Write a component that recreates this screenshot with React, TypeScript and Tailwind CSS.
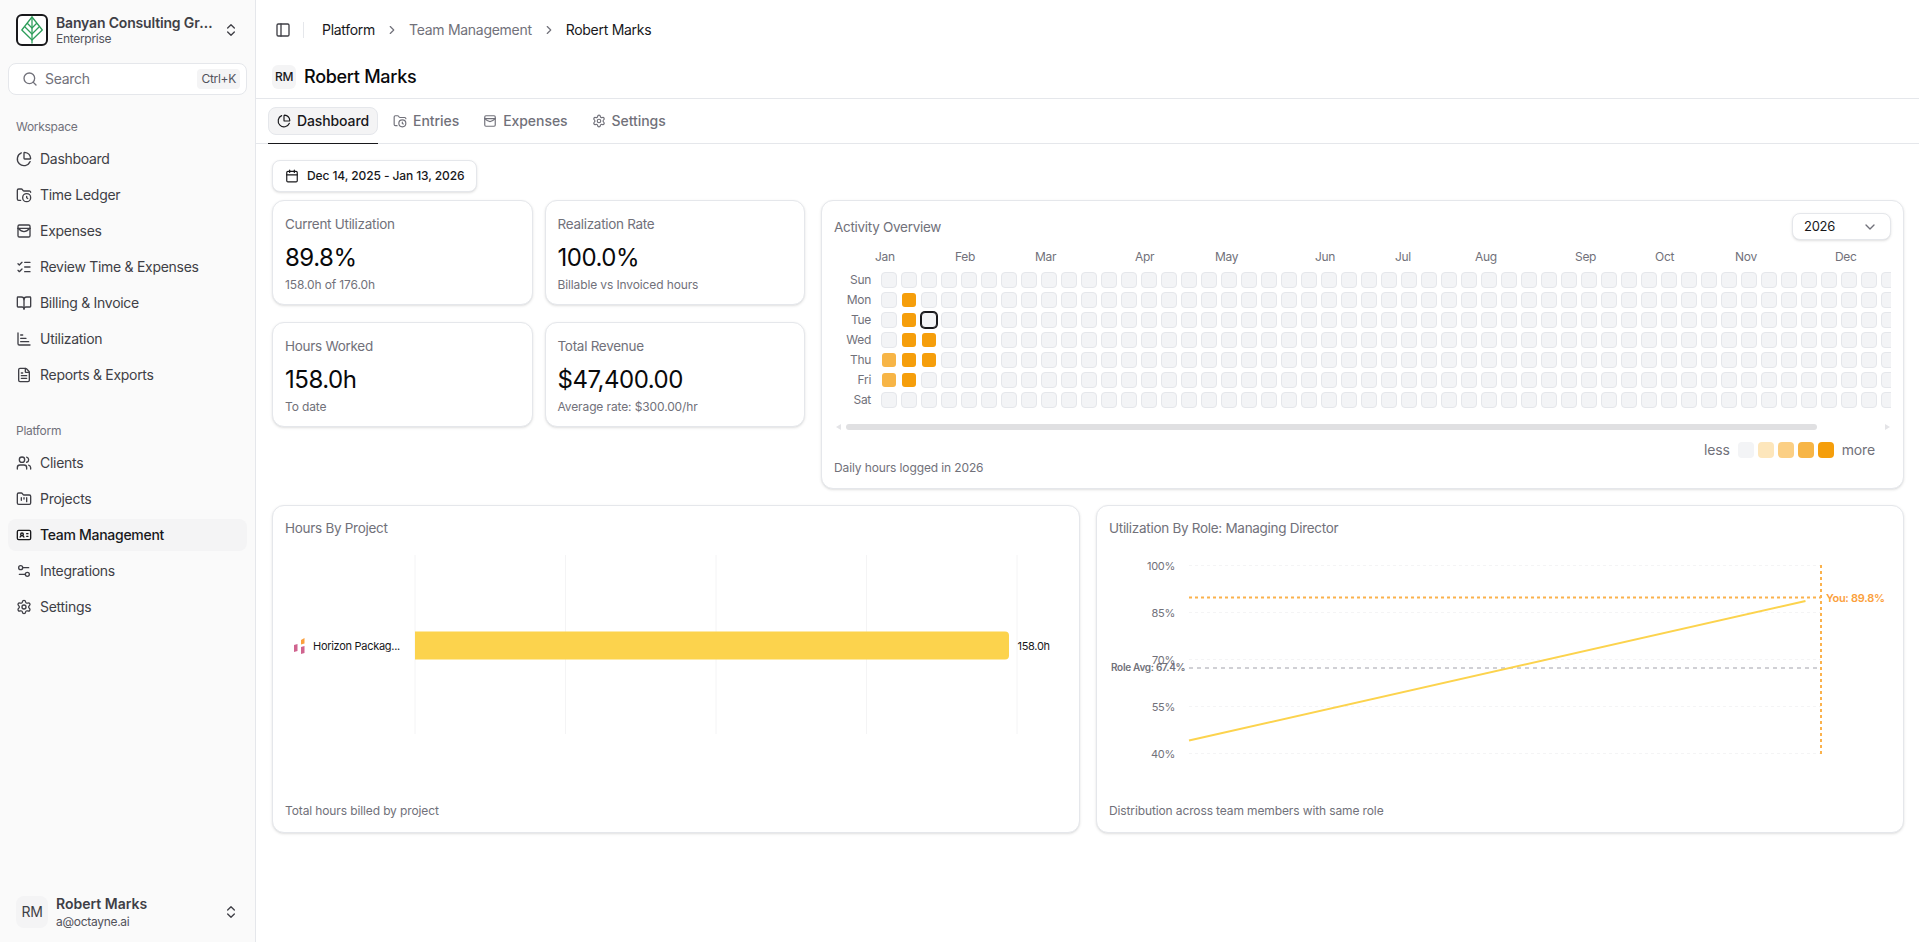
import React from 'react';
import {
  BookOpen,
  Calendar,
  ChartBarIncreasing,
  ChartPie,
  ChevronDown,
  ChevronRight,
  ChevronsUpDown,
  FileText,
  FolderClock,
  FolderKanban,
  IdCard,
  ListChecks,
  PanelLeft,
  Search,
  Settings,
  Settings2,
  Users,
} from 'lucide-react';

const cardClass = 'rounded-xl border border-[#e5e7eb] bg-white shadow-sm';

const ExpenseIcon: React.FC<{ size?: number }> = ({ size = 16 }) => (
  <svg width={size} height={size} viewBox="0 0 24 24" fill="none" stroke="currentColor" strokeWidth={2} strokeLinecap="round" strokeLinejoin="round">
    <rect x="3" y="3" width="18" height="18" rx="2" />
    <path d="M3 8h18" />
    <path d="M3 8c3 3 6 5 9 5s6-2 9-5" />
  </svg>
);

const BanyanLogo = () => (
  <svg width="32" height="32" viewBox="0 0 32 32" fill="none" className="shrink-0">
    <rect x="1" y="1" width="30" height="30" rx="5" fill="#fff" stroke="#18181b" strokeWidth="2" />
    <g stroke="#2e9e5b" strokeWidth="1.3" strokeLinecap="round" strokeLinejoin="round">
      <path d="M16 3 26.3 16 16 26 5.8 16Z" />
      <path d="M16 3v26" />
      <path d="M16 14 11.5 9.5M16 14l4.5-4.5M16 20l-7-7M16 20l7-7" />
    </g>
  </svg>
);

const workspaceItems = [
  { label: 'Dashboard', icon: <ChartPie size={16} /> },
  { label: 'Time Ledger', icon: <FolderClock size={16} /> },
  { label: 'Expenses', icon: <ExpenseIcon /> },
  { label: 'Review Time & Expenses', icon: <ListChecks size={16} /> },
  { label: 'Billing & Invoice', icon: <BookOpen size={16} /> },
  { label: 'Utilization', icon: <ChartBarIncreasing size={16} /> },
  { label: 'Reports & Exports', icon: <FileText size={16} /> },
];

const platformItems = [
  { label: 'Clients', icon: <Users size={16} /> },
  { label: 'Projects', icon: <FolderKanban size={16} /> },
  { label: 'Team Management', icon: <IdCard size={16} />, active: true },
  { label: 'Integrations', icon: <Settings2 size={16} /> },
  { label: 'Settings', icon: <Settings size={16} /> },
];

const NavItem: React.FC<{ label: string; icon: React.ReactNode; active?: boolean }> = ({ label, icon, active }) => (
  <a
    className={
      active
        ? 'flex h-8 items-center gap-2 rounded-lg bg-[#f4f4f5] px-2 text-sm font-medium text-[#18181b]'
        : 'flex h-8 items-center gap-2 rounded-lg px-2 text-sm text-[#3f3f46]'
    }
  >
    {icon}
    <span>{label}</span>
  </a>
);

const Sidebar = () => (
  <aside className="flex h-screen w-[256px] shrink-0 flex-col border-r border-[#e5e7eb] bg-[#fafafa] px-2">
    <div className="mt-[14px] flex h-8 items-center gap-2 px-2">
      <BanyanLogo />
      <div className="min-w-0 flex-1">
        <div className="truncate text-sm leading-[18px] font-semibold tracking-[-0.012em] text-[#3f3f46]">Banyan Consulting Group</div>
        <div className="text-xs leading-[14px] text-[#52525b]">Enterprise</div>
      </div>
      <ChevronsUpDown size={16} className="shrink-0 text-[#3f3f46]" />
    </div>
    <div className="mt-[17px] flex h-8 items-center rounded-lg border border-[#e5e7eb] bg-white pr-[6px] pl-[13px] text-sm text-[#71717a]">
      <Search size={16} />
      <span className="ml-[7px] flex-1">Search</span>
      <kbd className="flex h-5 items-center rounded bg-[#f4f4f5] px-1 font-[family-name:Inter,sans-serif] text-xs text-[#52525b]">Ctrl+K</kbd>
    </div>
    <div className="mt-6 px-2 text-xs leading-4 text-[#71717a]">Workspace</div>
    <nav className="mt-2 flex flex-col gap-1">
      {workspaceItems.map((item) => (
        <NavItem key={item.label} {...item} />
      ))}
    </nav>
    <div className="mt-8 px-2 text-xs leading-4 text-[#71717a]">Platform</div>
    <nav className="mt-2 flex flex-col gap-1">
      {platformItems.map((item) => (
        <NavItem key={item.label} {...item} />
      ))}
    </nav>
    <div className="mt-auto mb-[14px] flex h-8 items-center gap-2 px-2">
      <div className="flex h-8 w-8 shrink-0 items-center justify-center rounded-lg bg-[#f4f4f5] text-sm text-[#3f3f46]">RM</div>
      <div className="min-w-0 flex-1">
        <div className="truncate text-sm leading-[18px] font-semibold tracking-normal text-[#3f3f46]">Robert Marks</div>
        <div className="mt-[2px] text-xs leading-[14px] text-[#52525b]">a@octayne.ai</div>
      </div>
      <ChevronsUpDown size={16} className="shrink-0 text-[#3f3f46]" />
    </div>
  </aside>
);

const tabs = [
  { label: 'Dashboard', icon: <ChartPie size={14} />, active: true },
  { label: 'Entries', icon: <FolderClock size={14} /> },
  { label: 'Expenses', icon: <ExpenseIcon size={14} /> },
  { label: 'Settings', icon: <Settings size={14} /> },
];

const PageHeader = () => (
  <header>
    <div className="flex h-[60px] items-center pl-[19px] text-sm">
      <PanelLeft size={16} className="text-[#3f3f46]" />
      <div className="mr-[18px] ml-3 h-4 w-px bg-[#e5e7eb]" />
      <div className="flex items-center gap-2.5">
        <span className="text-[#18181b]">Platform</span>
        <ChevronRight size={14} className="text-[#71717a]" />
        <span className="text-[#71717a]">Team Management</span>
        <ChevronRight size={14} className="text-[#71717a]" />
        <span className="text-[#18181b]">Robert Marks</span>
      </div>
    </div>
    <div className="mt-[5px] flex items-center gap-2 border-b border-[#e5e7eb] pb-[9px] pl-4">
      <div className="flex h-6 w-6 items-center justify-center rounded-md bg-[#f4f4f5] text-xs font-medium text-[#18181b]">RM</div>
      <h1 className="text-lg leading-6 font-medium text-[#09090b]">Robert Marks</h1>
    </div>
    <nav className="flex gap-1.5 border-b border-[#e5e7eb] px-3">
      {tabs.map((tab) => (
        <div key={tab.label} className={tab.active ? '-mb-px border-b border-[#18181b] pt-2 pb-2' : '-mb-px border-b border-transparent pt-2 pb-2'}>
          <div
            className={
              tab.active
                ? 'flex h-7 items-center gap-1.5 rounded-lg border border-[#e5e7eb] bg-[#f4f4f5] px-2 text-sm font-medium tracking-[-0.008em] text-[#18181b]'
                : 'flex h-7 items-center gap-1.5 rounded-lg border border-transparent px-2 text-sm font-medium tracking-[-0.004em] text-[#71717a]'
            }
          >
            {tab.icon}
            {tab.label}
          </div>
        </div>
      ))}
    </nav>
  </header>
);

const stats = [
  { title: 'Current Utilization', value: '89.8%', note: '158.0h of 176.0h' },
  { title: 'Realization Rate', value: '100.0%', note: 'Billable vs Invoiced hours' },
  { title: 'Hours Worked', value: '158.0h', note: 'To date' },
  { title: 'Total Revenue', value: '$47,400.00', note: 'Average rate: $300.00/hr' },
];

const StatCard: React.FC<{ title: string; value: string; note: string }> = ({ title, value, note }) => (
  <div className={`${cardClass} h-[105px] px-3 pt-[13px]`}>
    <div className="text-[13.5px] leading-5 text-[#71717a]">{title}</div>
    <div className="mt-2 text-2xl leading-8 font-normal tracking-[-0.02em] text-[#09090b]">{value}</div>
    <div className="mt-[3px] text-xs leading-4 tracking-[-0.01em] text-[#71717a]">{note}</div>
  </div>
);

const months = [
  { label: 'Jan', width: 'w-[80px]' },
  { label: 'Feb', width: 'w-[80px]' },
  { label: 'Mar', width: 'w-[100px]' },
  { label: 'Apr', width: 'w-[80px]' },
  { label: 'May', width: 'w-[100px]' },
  { label: 'Jun', width: 'w-[80px]' },
  { label: 'Jul', width: 'w-[80px]' },
  { label: 'Aug', width: 'w-[100px]' },
  { label: 'Sep', width: 'w-[80px]' },
  { label: 'Oct', width: 'w-[80px]' },
  { label: 'Nov', width: 'w-[100px]' },
  { label: 'Dec', width: 'w-[80px]' },
];

const days = ['Sun', 'Mon', 'Tue', 'Wed', 'Thu', 'Fri', 'Sat'];

// "row-col" -> intensity for the logged days
const logged: Record<string, string> = {
  '1-1': 'full',
  '2-1': 'full',
  '3-1': 'full',
  '3-2': 'full',
  '4-0': 'mid',
  '4-1': 'full',
  '4-2': 'full',
  '5-0': 'mid',
  '5-1': 'full',
};

const Cell: React.FC<{ row: number; col: number }> = ({ row, col }) => {
  const level = logged[`${row}-${col}`];
  if (level === 'full') return <div className="h-4 w-4 shrink-0 rounded-[4px] border border-transparent bg-[#f59e0b] bg-clip-padding" />;
  if (level === 'mid') return <div className="h-4 w-4 shrink-0 rounded-[4px] border border-transparent bg-[#f7b546] bg-clip-padding" />;
  if (row === 2 && col === 2) return <div className="h-4 w-4 shrink-0 rounded-[4px] border border-[#18181b] bg-[#f3f4f6] ring-1 ring-[#18181b]" />;
  return <div className="h-4 w-4 shrink-0 rounded-[4px] border border-[#e5e7eb] bg-[#f3f4f6]" />;
};

const ActivityCard = () => (
  <div className={`${cardClass} flex h-[289px] min-w-0 flex-1 flex-col pt-3 pr-3 pl-[13px]`}>
    <div className="flex h-[27px] items-center justify-between">
      <span className="relative top-px -ml-px text-[13.5px] text-[#71717a]">Activity Overview</span>
      <div className="flex h-[27px] w-[99px] items-center justify-between rounded-lg border border-[#e5e7eb] bg-white pr-3 pl-[11px] text-[13px] text-[#18181b] shadow-sm">
        2026
        <ChevronDown size={16} className="text-[#71717a]" />
      </div>
    </div>
    <div className="mt-[9px] shrink-0 overflow-hidden">
      <div className="flex pl-[40px] text-xs leading-4 text-[#71717a]">
        {months.map((m) => (
          <span key={m.label} className={`${m.width} shrink-0`}>
            {m.label}
          </span>
        ))}
      </div>
      <div className="mt-[6px] flex flex-col gap-1 py-px">
        {days.map((day, row) => (
          <div key={day} className="flex items-center">
            <span className="mr-[10px] w-[36px] shrink-0 text-right text-xs text-[#71717a]">{day}</span>
            <div className="flex gap-1">
              {Array.from({ length: 53 }, (_, col) => (
                <Cell key={col} row={row} col={col} />
              ))}
            </div>
          </div>
        ))}
      </div>
    </div>
    {/* native scrollbar look */}
    <div className="mt-[15px] flex h-[6px] shrink-0 items-center">
      <svg width="6" height="6" viewBox="0 0 6 6" className="ml-[1px]">
        <path d="M5 0v6L0 3Z" fill="#e4e4e7" />
      </svg>
      <div className="ml-[4px] h-[6px] w-[971px] rounded-full bg-[#e0e0e2]" />
      <svg width="6" height="6" viewBox="0 0 6 6" className="mr-[1px] ml-auto">
        <path d="M1 0v6l5-3Z" fill="#e4e4e7" />
      </svg>
    </div>
    <div className="mt-[12px] flex items-center justify-end gap-[4px] pr-[16px] text-sm leading-4 tracking-[-0.01em] text-[#71717a]">
      <span className="mr-[4px]">less</span>
      <div className="h-4 w-4 rounded-[4px] bg-[#f3f4f6]" />
      <div className="h-4 w-4 rounded-[4px] bg-[#fde6bb]" />
      <div className="h-4 w-4 rounded-[4px] bg-[#fbcf84]" />
      <div className="h-4 w-4 rounded-[4px] bg-[#f7b546]" />
      <div className="h-4 w-4 rounded-[4px] bg-[#f59e0b]" />
      <span className="ml-[4px]">more</span>
    </div>
    <div className="mt-auto mb-3 -ml-px text-xs leading-4 tracking-[-0.01em] text-[#71717a]">Daily hours logged in 2026</div>
  </div>
);

const HoursChart = () => (
  <svg width="780" height="180" viewBox="0 0 780 180" className="mt-4 block">
    {[130, 280.5, 431, 581.5, 732].map((x) => (
      <line key={x} x1={x} x2={x} y1={1} y2={180} stroke="#f4f4f5" strokeWidth="1" />
    ))}
    <path d="M130 77.5h590a4 4 0 0 1 4 4v20a4 4 0 0 1-4 4H130Z" fill="#fcd34d" />
    <polygon points="9,91 12.5,90 12.5,97 9,98" fill="#d0648f" />
    <polygon points="16,86 19.5,84 19.5,89.5 16,90.5" fill="#fb9f3c" />
    <polygon points="16,93 19.5,92 19.5,99 16,100" fill="#d0648f" />
    <text x="28" y="95.5" fontSize="11" fill="#18181b">Horizon Packag...</text>
    <text x="732.5" y="95.5" fontSize="11" fill="#18181b">158.0h</text>
  </svg>
);

const UtilChart = () => {
  const ticks: [string, number][] = [
    ['100%', 9.5],
    ['85%', 56.5],
    ['70%', 103.5],
    ['55%', 150.5],
    ['40%', 197.5],
  ];
  return (
    <svg width="781" height="210" viewBox="0 0 781 210" className="mt-[18px] block">
      {ticks.map(([label, y]) => (
        <g key={label}>
          <line x1="80" x2="712" y1={y} y2={y} stroke="#f4f4f5" strokeWidth="1" strokeDasharray="3 3" />
          <text x="66" y={y + 4} fontSize="11" fill="#71717a" textAnchor="end">{label}</text>
        </g>
      ))}
      <line x1="80" x2="712" y1="41.5" y2="41.5" stroke="#fbb24c" strokeWidth="2" strokeDasharray="3 3" />
      <line x1="80" x2="712" y1="112" y2="112" stroke="#a1a1aa" strokeWidth="1" strokeDasharray="4 4" />
      <line x1="712" x2="712" y1="9" y2="198" stroke="#fbb24c" strokeWidth="2" strokeDasharray="3 3" />
      <line x1="80" x2="696.5" y1="184.5" y2="45" stroke="#fcd34d" strokeWidth="2" />
      <text x="2" y="115" fontSize="10" fontWeight="600" fill="#71717a">Role Avg: 67.4%</text>
      <text x="717" y="45.5" fontSize="11" fontWeight="600" fill="#fb9f3c">You: 89.8%</text>
    </svg>
  );
};

const ChartCard: React.FC<{ title: string; note: string; children: React.ReactNode }> = ({ title, note, children }) => (
  <div className={`${cardClass} flex h-[328px] flex-col px-3 pt-3`}>
    <div className="text-[13.5px] leading-5 text-[#71717a]">{title}</div>
    {children}
    <div className="mt-auto mb-[13px] text-xs leading-4 tracking-[-0.01em] text-[#71717a]">{note}</div>
  </div>
);

export default function App() {
  return (
    <div className="flex h-screen overflow-hidden bg-white font-[family-name:Inter,sans-serif] tracking-[-0.018em]">
      <Sidebar />
      <main className="min-w-0 flex-1">
        <PageHeader />
        <div className="pt-4 pr-[15px] pl-4">
          <div className="flex h-8 w-[205px] items-center gap-2 rounded-lg border border-[#e5e7eb] bg-white px-3 text-xs font-medium tracking-[-0.008em] text-[#18181b] shadow-sm">
            <Calendar size={14} className="shrink-0" />
            <span className="whitespace-nowrap">Dec 14, 2025 - Jan 13, 2026</span>
          </div>
          <div className="mt-2 flex gap-4">
            <div className="grid w-[533px] shrink-0 grid-cols-2 content-start gap-x-3 gap-y-[17px]">
              {stats.map((s) => (
                <StatCard key={s.title} {...s} />
              ))}
            </div>
            <ActivityCard />
          </div>
          <div className="mt-4 grid grid-cols-2 gap-4">
            <ChartCard title="Hours By Project" note="Total hours billed by project">
              <HoursChart />
            </ChartCard>
            <ChartCard title="Utilization By Role: Managing Director" note="Distribution across team members with same role">
              <UtilChart />
            </ChartCard>
          </div>
        </div>
      </main>
    </div>
  );
}
